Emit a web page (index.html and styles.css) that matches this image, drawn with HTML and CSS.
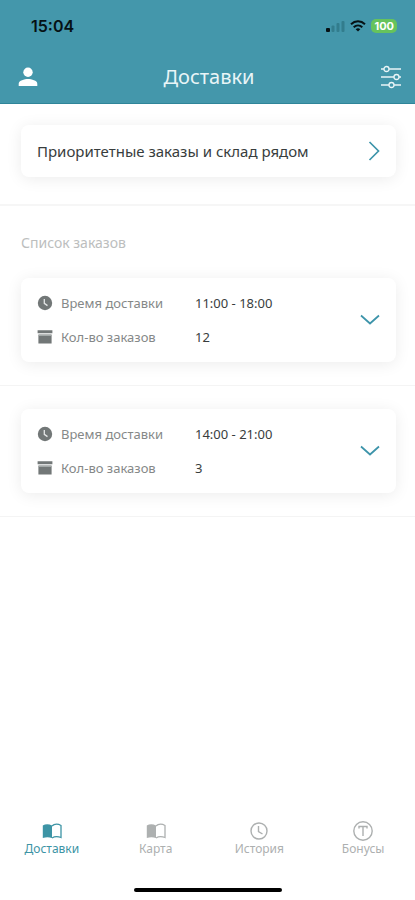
FILE: index.html
```html
<!DOCTYPE html>
<html lang="ru">
<head>
<meta charset="utf-8">
<meta name="viewport" content="width=device-width, initial-scale=1">
<title>Доставки</title>
<link rel="stylesheet" href="styles.css">
</head>
<body>
<svg class="defs" aria-hidden="true">
  <symbol id="clock-solid" viewBox="0 0 16 16"><circle cx="8" cy="8" r="7.2" fill="currentColor"/><path d="M7.3 4v4.400l3.200 2.200" fill="none" stroke="#e4e6e6" stroke-width="1.300"/></symbol>
  <symbol id="box" viewBox="0 0 16 16"><path d="M.6 1.200h14.800v3H.6zM1.400 5.400h13.200v9.200H1.400z" fill="currentColor"/><path d="M2 6.400h12" stroke="#a9afae" stroke-width="1"/></symbol>
  <symbol id="chevron-down" viewBox="0 0 20 12"><path d="M1 1.500l9 8 9-8" fill="none" stroke="currentColor" stroke-width="1.700"/></symbol>
  <symbol id="book" viewBox="0 0 20 16"><path d="M.8 2.500C3.500.8 7 .8 10 2.500V15c-3-1-6-1-9.200 0z" fill="currentColor"/><path d="M10 3c1.500-1.500 3-1.800 4.500-1.800 1.500 0 3 .4 4.500 1.300v12c-1.500-.6-3-.8-4.500-.8s-3 .4-4.500 1.300" fill="none" stroke="currentColor" stroke-width="1.300"/></symbol>
</svg>
<div class="app">
  <header class="header">
    <div class="status">
      <span class="time">15:04</span>
      <div class="indicators">
        <svg width="20" height="14" viewBox="0 0 20 14" aria-hidden="true"><rect x="1" y="9" width="4" height="4" rx="1" fill="#061114"/><g fill="#327d8d"><rect x="6.500" y="6.500" width="3" height="6.500" rx="1"/><rect x="11.500" y="4" width="3" height="9" rx="1"/><rect x="16.500" y="2" width="3" height="11" rx="1"/></g></svg>
        <svg width="16" height="12" viewBox="0 0 16 12" fill="none" stroke="#061114" stroke-width="2" aria-hidden="true"><path d="M1 4.200c4-3.800 10-3.800 14 0M3.700 7.200c2.500-2.400 6.100-2.400 8.600 0"/><path d="M5.700 9.200c1.400-1.200 3.200-1.200 4.600 0L8 11.600z" fill="#061114" stroke="none"/></svg>
        <span class="battery">100</span>
      </div>
    </div>
    <div class="toolbar">
      <button class="icon-button" aria-label="Профиль"><svg width="20" height="20" viewBox="0 0 20 20" fill="#fff"><circle cx="10" cy="5.200" r="4.700"/><path d="M.7 19v-2.200c0-3.200 5.800-4.700 9.300-4.700s9.300 1.500 9.300 4.700V19z"/></svg></button>
      <h1 class="title">Доставки</h1>
      <button class="icon-button" aria-label="Фильтры"><svg width="22" height="24" viewBox="0 0 22 24" fill="none" stroke="#e9f5f7" stroke-width="1.300"><path d="M1 4h3M9 4h12M1 12h13M19 12h2M1 20h8M14 20h7"/><circle cx="6.500" cy="4" r="2.500"/><circle cx="16.500" cy="12" r="2.500"/><circle cx="11.500" cy="20" r="2.500"/></svg></button>
    </div>
  </header>
  <main class="content">
    <section class="section priority">
      <button class="card link-card"><span>Приоритетные заказы и склад рядом</span><svg width="12" height="20" viewBox="0 0 12 20" aria-hidden="true"><path d="M1.500 1l9 9-9 9" fill="none" stroke="currentColor" stroke-width="1.700"/></svg></button>
    </section>
    <section class="section">
      <h2 class="list-title">Список заказов</h2>
      <button class="card order">
        <span class="details">
          <span class="row"><svg class="row-icon"><use href="#clock-solid"/></svg><span class="label">Время доставки</span><span>11:00 - 18:00</span></span>
          <span class="row"><svg class="row-icon"><use href="#box"/></svg><span class="label">Кол-во заказов</span><span>12</span></span>
        </span>
        <svg class="chevron"><use href="#chevron-down"/></svg>
      </button>
    </section>
    <section class="section">
      <button class="card order">
        <span class="details">
          <span class="row"><svg class="row-icon"><use href="#clock-solid"/></svg><span class="label">Время доставки</span><span>14:00 - 21:00</span></span>
          <span class="row"><svg class="row-icon"><use href="#box"/></svg><span class="label">Кол-во заказов</span><span>3</span></span>
        </span>
        <svg class="chevron"><use href="#chevron-down"/></svg>
      </button>
    </section>
  </main>
  <footer class="footer">
    <nav class="tabs">
      <a class="tab active" href="#deliveries" aria-current="page"><svg class="tab-icon" viewBox="0 0 20 16"><use href="#book"/></svg>Доставки</a>
      <a class="tab" href="#map"><svg class="tab-icon" viewBox="0 0 20 16"><use href="#book"/></svg>Карта</a>
      <a class="tab" href="#history"><svg class="tab-icon" viewBox="0 0 20 20" fill="none" stroke="currentColor" stroke-width="1.400"><circle cx="10" cy="10" r="8"/><path d="M9.500 5v5.500l4 2.500"/></svg>История</a>
      <a class="tab" href="#bonuses"><svg class="tab-icon" viewBox="0 0 20 20" fill="none" stroke="currentColor" stroke-width="1.400"><circle cx="10" cy="10" r="9.200"/><path d="M6 7.500v-2h8v2M10 5.500v9.500"/></svg>Бонусы</a>
    </nav>
    <div class="home-bar"></div>
  </footer>
</div>
</body>
</html>
```
FILE: styles.css
```css
* { box-sizing: border-box; }
body { margin: 0; background: #fff; color: #383d3d; font-family: "Noto Sans", sans-serif; }
button { margin: 0; padding: 0; border: 0; background: none; color: inherit; font: inherit; text-align: left; cursor: pointer; }
svg { display: block; flex: none; }
.defs { position: absolute; width: 0; height: 0; }
.app { display: flex; flex-direction: column; min-height: 100vh; }

.header { background: #4497ab; border-bottom: 1px solid #2f8599; }
.status { display: flex; align-items: center; justify-content: space-between; height: 51px; padding: 0 18px 0 31px; }
.time { color: #061114; font: 600 16px/20px Inter, sans-serif; }
.indicators { display: flex; align-items: center; gap: 5px; }
.battery { padding: 0 3px; border-radius: 5px; background: #66c35c; color: #fff; font: 700 11px/14px Inter, sans-serif; }
.toolbar { display: flex; align-items: center; justify-content: space-between; height: 52px; padding: 0 13px 0 18px; }
.title { margin: 0; color: #e9f5f7; font-size: 20px; font-weight: 400; line-height: 28px; }

.content { flex: 1; }
.section { padding: 23px 19px 23px 21px; border-bottom: 1px solid #f4f4f4; }
.priority { padding-top: 21px; padding-bottom: 27px; border-bottom: 2px solid #f6f6f6; }
.card { display: flex; align-items: center; justify-content: space-between; width: 100%; padding: 15px 16px; border-radius: 8px; background: #fff; box-shadow: 0 2px 16px rgba(0, 0, 0, 0.08); }
.card > svg { color: #3d94aa; }
.link-card { min-height: 52px; font-size: 15px; line-height: 20px; }
.list-title { margin: 4px 0 25px; color: #bcbebe; font-size: 14px; font-weight: 400; line-height: 20px; }
.details { display: grid; gap: 14px; }
.row { display: grid; grid-template-columns: 16px 126px auto; column-gap: 8px; align-items: center; font-size: 13px; line-height: 20px; }
.row-icon { width: 16px; height: 16px; color: #727777; }
.label { color: #858888; }
.chevron { width: 20px; height: 12px; }

.footer { padding-bottom: 8px; }
.tabs { display: grid; grid-template-columns: repeat(4, 1fr); margin-bottom: 31px; }
.tab { display: flex; flex-direction: column; align-items: center; color: #adb0b0; font-size: 12px; line-height: 16px; text-decoration: none; }
.tab-icon { width: 20px; height: 20px; }
.active { color: #3d94a5; }
.home-bar { width: 148px; height: 4px; margin: 0 auto; border-radius: 2px; background: #000; }
```
